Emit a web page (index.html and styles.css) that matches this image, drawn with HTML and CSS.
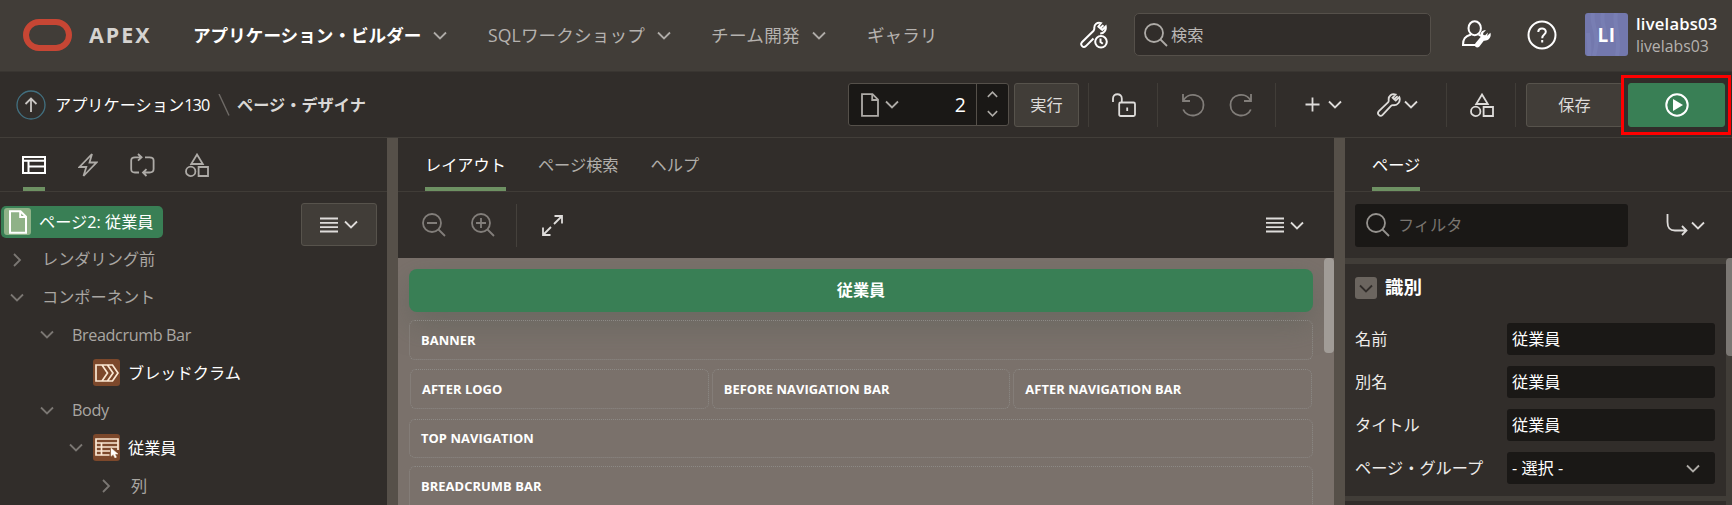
FILE: index.html
```html
<!DOCTYPE html>
<html lang="ja">
<head>
<meta charset="utf-8">
<title>ページ・デザイナ</title>
<link rel="stylesheet" href="styles.css">
</head>
<body>
<svg class="defs" width="0" height="0">
  <symbol id="chev" viewBox="0 0 14 9"><path d="M1 1.5 7 7.5 13 1.5"/></symbol>
  <symbol id="chev-right" viewBox="0 0 9 14"><path d="M1.5 1 7.5 7 1.5 13"/></symbol>
  <symbol id="search" viewBox="0 0 24 24"><circle cx="10" cy="10" r="9"/><path d="M16.5 16.5 23 23"/></symbol>
  <symbol id="doc" viewBox="0 0 18 24"><path d="M1 1.2H11.5L17 6.7V22.8H1ZM11.2 1.5V7H17"/></symbol>
  <symbol id="wrench" viewBox="0 0 24 24"><path d="M20.6 3.2 17.2 6.2 15.6 4.8 18.6 1.5C14.8.2 11.2 3 11.7 7.1 11.8 8.3 11.6 8.8 11 9.4L1.9 18.2C-.6 20.8 3 24.4 5.6 21.9L14 12.9C14.6 12.3 15.2 12.1 16.2 12.2 20.5 12.6 24 8.5 22.3 4.2L18.8 7.6 17.2 6.2"/></symbol>
  <symbol id="shapes" viewBox="0 0 24 24"><path d="M12 1.5 17.8 11H6.2ZM13.6 14H23V23H13.6Z"/><circle cx="5.7" cy="18.4" r="4.7"/></symbol>
  <symbol id="lines" viewBox="0 0 18 16"><path d="M0 1.5H18M0 5.8H18M0 10.2H18M0 14.5H18"/></symbol>
</svg>

<header class="header">
  <svg class="logo" width="49" height="32" viewBox="0 0 49 32"><rect x="3" y="3" width="43" height="26" rx="13"/></svg>
  <span class="brand">APEX</span>
  <nav class="nav">
    <a class="nav-item nav-builder">アプリケーション・ビルダー<svg class="i" width="14" height="9"><use href="#chev"/></svg></a>
    <a class="nav-item nav-sql">SQLワークショップ<svg class="i" width="14" height="9"><use href="#chev"/></svg></a>
    <a class="nav-item nav-team">チーム開発<svg class="i" width="14" height="9"><use href="#chev"/></svg></a>
    <a class="nav-item">ギャラリ</a>
  </nav>
  <svg class="i white admin" width="28" height="28" viewBox="0 0 28 28"><path d="M23.5 4.3 20.2 7.1 18.4 5.5 21 2.1C17.3.8 14 3.4 14.3 7.2 14.4 8.5 14.2 9 13.6 9.7L1.9 21.3C-.2 23.8 3.2 27.6 5.9 25.1L13.5 17.5M20.2 12.6C24 12.6 26.4 9.2 25.7 5.5L22.3 8.8 20.2 7.1"/><circle cx="21" cy="20.8" r="5.8"/><path d="M20.5 17.5V21L22.8 22.8"/></svg>
  <div class="search"><svg class="i" width="24" height="24"><use href="#search"/></svg><span>検索</span></div>
  <svg class="i white usericon" width="29" height="29" viewBox="0 0 29 29"><ellipse cx="12.7" cy="8.2" rx="6.2" ry="7"/><path d="M9 14.5C3 16.5 1 18.5 1 25H13.5M16.5 14.5 19 16"/><path class="solid" d="M26 12.5 23.2 15.2 21.3 15 21.2 13 24 10.2C20 9.6 17.5 13 18.6 17L13.4 23.2C11.4 26.3 14.8 29 17.2 26.8L21.8 20.7C26.5 21.2 29.8 17 28.4 12.8L25 16Z"/></svg>
  <svg class="i white help" width="30" height="30" viewBox="0 0 30 30"><circle cx="15" cy="15" r="13.5"/><path d="M11.3 12C11.3 7.3 18.8 7.3 18.8 11.8 18.8 14.8 15.2 14.3 15.2 18.2M15.2 20V22.4"/></svg>
  <div class="avatar">
    <svg class="avatar-art" width="43" height="43" viewBox="0 0 43 43"><path d="M8 0C5 12 16 20 9 43M18 0C15 10 22 17 20 30M31 0C28 12 36 23 32 43M3 20C4 29 5 34 4 43"/></svg>
    <span>LI</span>
  </div>
  <div class="user"><b>livelabs03</b><span>livelabs03</span></div>
</header>

<div class="toolbar">
  <svg class="up" width="30" height="30" viewBox="0 0 30 30"><circle cx="15" cy="15" r="14"/><path d="M15 22V9M9.5 14 15 8.5 20.5 14"/></svg>
  <span class="crumb">アプリケーション<span class="num">130</span></span>
  <svg class="i slash" width="12" height="22" viewBox="0 0 12 22"><path d="M1 0 11 21.5"/></svg>
  <b class="crumb-current">ページ・デザイナ</b>
  <div class="page-select">
    <svg class="i" width="18" height="24"><use href="#doc"/></svg>
    <svg class="i" width="14" height="9"><use href="#chev"/></svg>
    <span class="page-no">2</span>
    <div class="spin">
      <svg class="i flip" width="11" height="7"><use href="#chev"/></svg>
      <svg class="i" width="11" height="7"><use href="#chev"/></svg>
    </div>
  </div>
  <button class="btn run">実行</button>
  <div class="cell c-lock"><svg class="i light" width="24" height="24" viewBox="0 0 24 24"><path d="M1 9V5.5C1-.2 9.8-.2 9.8 5.5V9.5M8.7 9.5H21.5Q23 9.5 23 11V21.5Q23 23 21.5 23H8.7Q7.2 23 7.2 21.5V11Q7.2 9.5 8.7 9.5M15.2 14.5V18"/></svg></div>
  <div class="cell c-undo">
    <svg class="i dim" width="24" height="24" viewBox="0 0 24 24"><path d="M2 1V8H9M2.3 7.7C7-1.5 22.5.5 22.5 12 22.5 24 6 26 2.2 16.5"/></svg>
    <svg class="i dim" width="24" height="24" viewBox="0 0 24 24"><path d="M22 1V8H15M21.7 7.7C17-1.5 1.5.5 1.5 12 1.5 24 18 26 21.8 16.5"/></svg>
  </div>
  <div class="cell c-add">
    <svg class="i light" width="15" height="15" viewBox="0 0 15 15"><path d="M7.5.5V14.5M.5 7.5H14.5"/></svg>
    <svg class="i light a-chev" width="14" height="9"><use href="#chev"/></svg>
    <svg class="i light a-wrench" width="24" height="24"><use href="#wrench"/></svg>
    <svg class="i light a-chev2" width="14" height="9"><use href="#chev"/></svg>
  </div>
  <div class="cell c-shapes"><svg class="i light" width="24" height="24"><use href="#shapes"/></svg></div>
  <div class="cell c-end"></div>
  <button class="btn save">保存</button>
  <div class="go-wrap"><button class="btn go"><svg class="i white" width="24" height="24" viewBox="0 0 24 24"><circle cx="12" cy="12" r="10.7"/><path class="solid" d="M8 6 18 12 8 18Z"/></svg></button><span class="marker"></span></div>
</div>

<main class="body">
  <section class="left">
    <div class="tabs icon-tabs">
      <span class="tab icon-tab active"><svg class="i white" width="24" height="18" viewBox="0 0 24 18"><path d="M1 1H23V17H1ZM1 4.7H23M6.5 4.7V17M6.5 10.5H23"/></svg></span>
      <svg class="i" width="20" height="24" viewBox="0 0 20 24"><path d="M14 1 1.5 14H8.3L5.5 23 18.5 9.5H11.5Z"/></svg>
      <svg class="i" width="25" height="24" viewBox="0 0 25 24"><path d="M9 19.5H5C2 19.5 1.2 18.5 1.2 16V7.5C1.2 5 2.5 4.3 5 4.3H11.5M8 1 11.6 4.3 8 7.6M15 4.3H19.5C22 4.3 23.6 5 23.6 7.5V16C23.6 18.5 22 19.5 19.5 19.5H13M16.5 16.2 13 19.5 16.5 23"/></svg>
      <svg class="i" width="24" height="24"><use href="#shapes"/></svg>
    </div>
    <div class="left-body">
      <ul class="tree">
        <li class="root"><span class="pill"><span class="box green"><svg class="i" width="18" height="24"><use href="#doc"/></svg></span>ページ2: 従業員</span></li>
        <li class="l1"><svg class="i tw" width="9" height="14"><use href="#chev-right"/></svg><span class="raised">レンダリング前</span></li>
        <li class="l1"><svg class="i tw" width="14" height="9"><use href="#chev"/></svg><span>コンポーネント</span></li>
        <li class="l2"><svg class="i tw" width="14" height="9"><use href="#chev"/></svg><span>Breadcrumb Bar</span></li>
        <li class="l3 strong"><span class="tw"></span><span class="box brown"><svg class="i" width="24" height="18" viewBox="0 0 24 18"><path d="M1 1H7L12.5 9 7 17H1ZM7 1H12.5L18 9 12.5 17H7M12.5 1H17.5L23 9 17.5 17H12.5"/></svg></span><span>ブレッドクラム</span></li>
        <li class="l2"><svg class="i tw" width="14" height="9"><use href="#chev"/></svg><span>Body</span></li>
        <li class="l3 strong"><svg class="i tw" width="14" height="9"><use href="#chev"/></svg><span class="box brown"><svg class="i" width="24" height="20" viewBox="0 0 24 20"><path d="M14.5 17H1V1H23V12M1 5H23M1 9H23M1 13H15M6.5 5V17"/><path class="solid thin" d="M16 10V18.3L18.2 16.5 20 20 21.5 19.2 20 16H23Z"/></svg></span><span>従業員</span></li>
        <li class="l4"><svg class="i tw" width="9" height="14"><use href="#chev-right"/></svg><span>列</span></li>
      </ul>
      <button class="btn menu"><svg class="i light" width="18" height="16"><use href="#lines"/></svg><svg class="i light" width="14" height="9"><use href="#chev"/></svg></button>
    </div>
  </section>
  <div class="splitter"></div>
  <section class="center">
    <div class="tabs text-tabs">
      <span class="tab active">レイアウト</span><span class="tab">ページ検索</span><span class="tab">ヘルプ</span>
    </div>
    <div class="subbar">
      <svg class="i dim" width="24" height="24" viewBox="0 0 24 24"><circle cx="10" cy="10" r="9"/><path d="M16.5 16.5 23 23M5 10H15"/></svg>
      <svg class="i dim zoom-in" width="24" height="24" viewBox="0 0 24 24"><circle cx="10" cy="10" r="9"/><path d="M16.5 16.5 23 23M5 10H15M10 5V15"/></svg>
      <span class="vline"></span>
      <svg class="i light" width="21" height="21" viewBox="0 0 21 21"><path d="M12.5 1H20V8.5M20 1 12 9M1 12.5V20H8.5M1 20 9 12"/></svg>
      <div class="sub-menu"><svg class="i light" width="18" height="16"><use href="#lines"/></svg><svg class="i light" width="14" height="9"><use href="#chev"/></svg></div>
    </div>
    <div class="canvas">
      <div class="layout">
        <div class="title">従業員</div>
        <div class="region banner">BANNER</div>
        <div class="region-row"><div class="region">AFTER LOGO</div><div class="region">BEFORE NAVIGATION BAR</div><div class="region">AFTER NAVIGATION BAR</div></div>
        <div class="region topnav">TOP NAVIGATION</div>
        <div class="region crumbbar">BREADCRUMB BAR</div>
      </div>
      <div class="thumb"></div>
    </div>
  </section>
  <div class="splitter"></div>
  <section class="right">
    <div class="tabs page-tabs"><span class="tab active">ページ</span></div>
    <div class="filterbar">
      <div class="filter"><svg class="i" width="24" height="24"><use href="#search"/></svg><span>フィルタ</span></div>
      <svg class="i light goto" width="22" height="22" viewBox="0 0 22 22"><path d="M1.5 0V8C1.5 14.5 4 16.5 9 16.5H20.5M16 12 20.5 16.5 16 21"/></svg>
      <svg class="i light" width="14" height="9"><use href="#chev"/></svg>
    </div>
    <div class="props">
      <div class="props-main">
        <div class="group-title"><span class="toggle"><svg class="i" width="14" height="9"><use href="#chev"/></svg></span><b>識別</b></div>
        <div class="field"><label>名前</label><span class="input">従業員</span></div>
        <div class="field"><label>別名</label><span class="input">従業員</span></div>
        <div class="field"><label>タイトル</label><span class="input">従業員</span></div>
        <div class="field"><label>ページ・グループ</label><span class="input">- 選択 -<svg class="i" width="14" height="9"><use href="#chev"/></svg></span></div>
        <div class="band"></div>
      </div>
      <div class="track"><div class="track-thumb"></div></div>
    </div>
  </section>
</main>
</body>
</html>
```
FILE: styles.css
```css
* { box-sizing: border-box; }
body {
  margin: 0; width: 1732px; height: 505px; overflow: hidden;
  display: flex; flex-direction: column;
  background: #312d2a; color: #fff;
  font: 16.2px/20px "Open Sans", "Noto Sans CJK JP", sans-serif;
  white-space: nowrap;
}
.defs { position: absolute; }
svg { display: block; flex: none; }
.i { fill: none; stroke: #aeaba7; stroke-width: 1.8; }
.white { stroke: #fff; stroke-width: 2; }
.light { stroke: #dedcda; }
.dim { stroke: #827e7a; }
.white .solid { fill: #fff; stroke: none; }

/* header */
.header { height: 72px; flex: none; display: flex; align-items: center; background: #413d38; border-bottom: 1px solid #393531; padding: 0 0 2px 23px; }
.logo { fill: none; stroke: #c74634; stroke-width: 6; }
.brand { width: 104px; margin-left: 17px; font-size: 21.4px; font-weight: 700; letter-spacing: 2px; color: #d5d3d0; }
.nav { display: flex; width: 887px; font-size: 17.6px; color: #b5b2af; }
.nav-item { display: flex; align-items: center; gap: 12px; }
.nav-item .i { margin-top: 2px; }
.nav-builder { width: 295px; color: #fff; font-weight: 700; }
.nav-sql { width: 223px; letter-spacing: .12px; }
.nav-team { width: 156px; letter-spacing: .3px; }
.admin { margin-right: 26px; }
.search { width: 297px; height: 43px; display: flex; align-items: center; gap: 3px; padding-left: 9px; background: #312d2a; border: 1px solid #55504a; border-radius: 5px; color: #bbb8b5; }
.usericon { margin-left: 31px; }
.help { margin: 0 28px 0 36px; }
.avatar { width: 43px; height: 43px; border-radius: 3px; overflow: hidden; display: grid; place-items: center; background: #7379ae; font-weight: 700; font-size: 19px; }
.avatar > * { grid-area: 1 / 1; }
.avatar-art { fill: none; stroke: #7f86ba; stroke-width: 4; opacity: .45; }
.avatar span { z-index: 1; letter-spacing: .5px; }
.user { margin-left: 8px; display: flex; flex-direction: column; line-height: 22px; font-size: 15.8px; color: #b5b2af; }
.user b { color: #fff; font-weight: 600; font-size: 16.6px; letter-spacing: .22px; }

/* toolbar */
.toolbar { height: 66px; flex: none; display: flex; align-items: center; border-bottom: 1px solid #423e39; padding-left: 16px; }
.up { fill: none; stroke: #427080; stroke-width: 1.3; }
.up path { stroke: #c9c6c3; stroke-width: 1.8; }
.crumb { width: 163px; margin-left: 9px; }
.num { letter-spacing: -.9px; }
.slash { stroke: #6f6b67; stroke-width: 1.4; }
.crumb-current { width: 611px; margin-left: 7px; color: #dad8d6; }
.page-select { width: 161px; height: 43px; display: flex; align-items: center; padding-left: 12px; background: #1a1816; border: 1px solid #55504a; border-radius: 3px; }
.page-select > .i + .i { margin-left: 6px; }
.page-no { width: 77px; padding-right: 10px; text-align: right; font-size: 19.5px; }
.spin { align-self: stretch; flex: 1; display: flex; flex-direction: column; align-items: center; justify-content: space-between; padding: 7px 0 8px; border-left: 1px solid #55504a; }
.spin .i { stroke-width: 2; }
.flip { transform: scaleY(-1); }
.btn { height: 44px; padding: 0; display: flex; align-items: center; justify-content: center; background: #413d38; border: 1px solid #57534c; border-radius: 3px; color: #dedcda; font: inherit; }
.run { width: 65px; margin-left: 5px; }
.cell { height: 44px; display: flex; align-items: center; border-left: 1px solid #413d38; }
.c-lock { width: 69px; margin-left: 9px; padding-left: 23px; }
.c-undo { width: 118px; padding-left: 23px; gap: 24px; }
.c-add { width: 171px; padding-left: 29px; }
.a-chev { margin-left: 8px; }
.a-wrench { margin-left: 35px; }
.a-chev2 { margin-left: 3px; }
.c-shapes { width: 69px; padding-left: 23px; }
.c-end { width: 11px; }
.save { width: 97px; }
.go-wrap { position: relative; margin-left: 5px; }
.go { width: 97px; background: #397f55; border-color: #397f55; }
.marker { position: absolute; inset: -8px -6px -8px -7px; border: 3px solid #fe0000; }

/* panels */
.body { flex: 1; min-height: 0; display: flex; }
.splitter { width: 11px; background: #565049; }
.left { width: 387px; display: flex; flex-direction: column; }
.center { width: 936px; display: flex; flex-direction: column; min-height: 0; }
.right { width: 387px; display: flex; flex-direction: column; }
.tabs { height: 54px; flex: none; display: flex; border-bottom: 1px solid #403c37; color: #b0ada9; }
.tab { height: 53px; display: flex; align-items: center; }
.tab.active { padding-top: 4px; border-bottom: 4px solid #6e9163; color: #fff; }
.icon-tabs { align-items: center; padding-left: 23px; }
.icon-tab { width: 22px; margin-right: 33px; justify-content: center; }
.icon-tabs > .i:nth-child(3) { margin: 0 30px 0 32px; }
.text-tabs { padding-left: 27px; gap: 32px; }
.page-tabs { padding-left: 27px; }

.left-body { display: flex; justify-content: space-between; padding: 11px 10px 0 1px; }
.tree { list-style: none; margin: 0; padding: 0; color: #a9a6a2; }
.tree li { height: 37.7px; display: flex; align-items: center; }
.tree .tw { width: 14px; stroke: #7b7773; }
.pill { width: 162px; height: 32px; display: flex; align-items: center; gap: 8px; padding-left: 3px; background: #397f55; border-radius: 5px; color: #fff; }
.box { width: 27px; height: 27px; display: grid; place-items: center; border-radius: 3px; }
.green { background: #8fb287; }
.green .i { stroke: #fff; stroke-width: 2; }
.brown { background: #7c482b; margin: 0 8px 0 10px; }
.brown .i { stroke: #fbe8d3; stroke-width: 1.7; }
.brown .solid { fill: #fff; stroke-width: .5; }
.l1 { padding-left: 9px; }
.l1 span { margin-left: 18px; }
.l1 .raised { margin-bottom: 2px; }
.l2 { padding-left: 39px; }
.l2 span { margin-left: 18px; letter-spacing: -.4px; }
.l3 { padding-left: 68px; }
.l4 { padding-left: 98px; }
.l4 span { margin-left: 18px; }
.strong { color: #fff; }
.menu { width: 76px; height: 43px; gap: 6px; }

.subbar { height: 66px; flex: none; display: flex; align-items: center; padding: 0 30px 0 24px; }
.zoom-in { margin-left: 25px; }
.vline { width: 1px; height: 43px; margin: 0 25px 0 21px; background: #45413c; }
.sub-menu { margin-left: auto; display: flex; align-items: center; gap: 6px; }
.canvas { flex: 1; min-height: 0; display: flex; justify-content: space-between; background: #7a716b; overflow: hidden; }
.layout { width: 915px; padding: 11px 0 0 11px; }
.title { height: 43px; border-radius: 8px; background: #397f55; text-align: center; line-height: 43px; font-weight: 700; box-shadow: 0 12px 32px rgba(80, 90, 80, .4); }
.region { height: 40px; padding-left: 11px; border: 1px dotted #8d8a86; border-radius: 6px; font-size: 12.9px; font-weight: 700; line-height: 39px; letter-spacing: .07px; }
.banner { margin-top: 8px; }
.region-row { display: flex; gap: 3px; padding: 9px 1px 10px; }
.region-row .region { flex: 1; }
.topnav { height: 39px; line-height: 37px; }
.crumbbar { height: 70px; margin-top: 8px; }
.thumb { width: 10px; height: 95px; border-radius: 4px; background: #a19c97; }

.filterbar { height: 66px; flex: none; display: flex; align-items: center; padding-left: 10px; }
.filter { width: 273px; height: 43px; display: flex; align-items: center; gap: 8px; padding-left: 11px; background: #1a1816; border-radius: 3px; color: #78746f; }
.filter .i { stroke: #96938f; }
.goto { margin: 0 3px 0 38px; }
.props { flex: 1; min-height: 0; display: flex; overflow: hidden; }
.props-main { width: 381px; border-top: 6px solid #413d38; }
.group-title { height: 59px; display: flex; align-items: flex-start; gap: 8px; padding: 13px 0 0 10px; font-size: 18.5px; }
.toggle { width: 22px; height: 22px; display: grid; place-items: center; border-radius: 3px; background: #6b655f; }
.toggle .i { stroke: #312d2a; }
.field { height: 43px; display: flex; align-items: flex-start; padding-left: 10px; line-height: 32px; }
.field label { width: 152px; color: #edebe9; }
.input { width: 208px; height: 32px; display: flex; align-items: center; justify-content: space-between; padding: 0 15px 0 5px; background: #1a1816; border-radius: 3px; }
.band { height: 5px; margin-top: 1px; background: #413d38; }
.track { width: 6px; background: #413d38; }
.track-thumb { height: 98px; border-radius: 4px 0 0 4px; background: #7b7773; }
```
